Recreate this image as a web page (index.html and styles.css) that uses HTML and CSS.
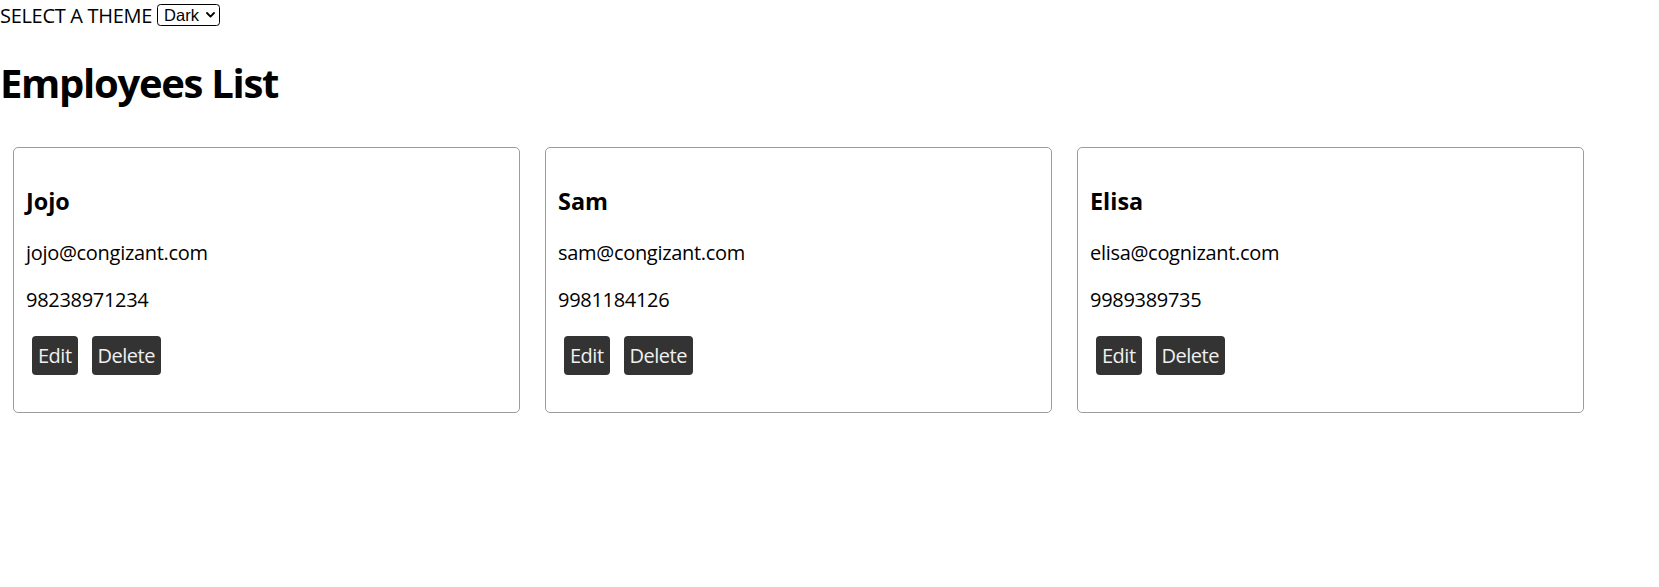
FILE: index.html
```html
<!DOCTYPE html>
<html lang="en">
<head>
<meta charset="utf-8">
<title>Employees List</title>
<link rel="stylesheet" href="styles.css">
</head>
<body>
<div class="theme-bar">
  <span class="theme-label">SELECT A THEME</span>
  <span class="select-wrap">
    <select class="theme-select">
      <option>Dark</option>
      <option>Light</option>
    </select>
    <svg class="chev" width="9" height="6" viewBox="0 0 9 6" aria-hidden="true"><path d="M1 1 L4.5 4.6 L8 1" fill="none" stroke="#000" stroke-width="1.8" stroke-linecap="round" stroke-linejoin="round"/></svg>
  </span>
</div>
<h1 class="title">Employees List</h1>
<div class="cards">
  <div class="card">
    <h3 class="name">Jojo</h3>
    <p class="info">jojo@congizant.com</p>
    <p class="info">98238971234</p>
    <div class="actions"><button class="btn">Edit</button><button class="btn">Delete</button></div>
  </div>
  <div class="card">
    <h3 class="name">Sam</h3>
    <p class="info">sam@congizant.com</p>
    <p class="info">9981184126</p>
    <div class="actions"><button class="btn">Edit</button><button class="btn">Delete</button></div>
  </div>
  <div class="card">
    <h3 class="name">Elisa</h3>
    <p class="info">elisa@cognizant.com</p>
    <p class="info">9989389735</p>
    <div class="actions"><button class="btn">Edit</button><button class="btn">Delete</button></div>
  </div>
</div>
</body>
</html>
```

FILE: styles.css
```css
body {
  margin: 0;
  font-family: "Open Sans", "Noto Sans", sans-serif;
  font-size: 20px;
  line-height: 27px;
  letter-spacing: -0.3px;
  color: #000;
  background: #fff;
}

.theme-bar {
  display: flex;
  align-items: flex-start;
  gap: 5px;
  height: 27px;
  padding-top: 2px;
}

.select-wrap {
  position: relative;
  display: flex;
  margin-top: 2px;
}

.theme-select {
  appearance: none;
  -webkit-appearance: none;
  display: block;
  width: 63px;
  height: 22px;
  box-sizing: border-box;
  border: 1.5px solid #000;
  border-radius: 3.5px;
  background: #fff;
  color: #000;
  font-family: "Liberation Sans", Arial, sans-serif;
  font-size: 16.5px;
  line-height: 19px;
  letter-spacing: 0;
  padding: 0 0 0 6px;
  margin: 0;
}

.chev {
  position: absolute;
  right: 5px;
  top: 8px;
  pointer-events: none;
}

.title {
  font-size: 40px;
  line-height: 53px;
  font-weight: 700;
  letter-spacing: -1.3px;
  margin: 27px 0;
}

.cards {
  display: flex;
  gap: 25px;
  padding: 11px 13px 0;
}

.card {
  width: 507px;
  box-sizing: border-box;
  border: 1px solid #9c9c9c;
  border-radius: 5px;
  padding: 12px 12px 0;
}

.name {
  font-size: 23.4px;
  line-height: 31px;
  font-weight: 700;
  letter-spacing: 0;
  margin: 26px 0 22px;
}

.info {
  margin: 20px 0;
}

.actions {
  display: flex;
  gap: 14px;
  padding: 3px 6px 37px;
}

.btn {
  font-family: inherit;
  font-size: 20px;
  line-height: 27px;
  letter-spacing: -0.5px;
  height: 39px;
  padding: 0 6px;
  border: none;
  border-radius: 4px;
  background: #333;
  color: #f0f0f0;
}
```
